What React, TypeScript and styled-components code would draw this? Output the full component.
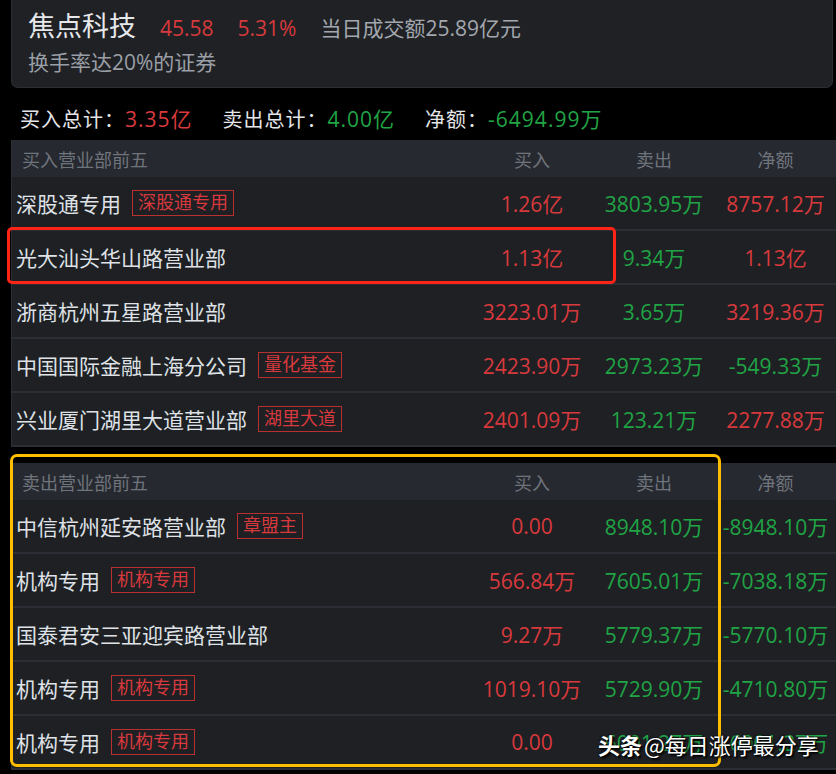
import React from 'react';
import styled, { createGlobalStyle } from 'styled-components';

const GlobalStyle = createGlobalStyle`
  html, body { margin: 0; padding: 0; background: #000; }
  body {
    font-family: "Open Sans", "Noto Sans CJK SC", sans-serif;
    width: 836px;
    height: 774px;
    overflow: hidden;
  }
`;

const RED = '#d8393c';
const GREEN = '#20a445';

const Page = styled.div`
  position: relative;
  width: 836px;
  height: 774px;
  padding-left: 11px;
  box-sizing: border-box;
  display: flex;
  flex-direction: column;
`;

const Card = styled.div`
  width: 822px;
  height: 88px;
  box-sizing: border-box;
  background: #1f2125;
  border: 1px solid #2b2e34;
  border-top: none;
  border-radius: 0 0 7px 7px;
  padding: 6px 16px 0;
  display: flex;
  flex-direction: column;
`;

const TitleRow = styled.div`
  display: flex;
  align-items: baseline;
  gap: 24px;
  height: 40px;
`;

const Title = styled.span`
  font-size: 27px;
  color: #e6e8eb;
  line-height: 40px;
`;

const Colored = styled.span<{ $c: string; $size?: number }>`
  color: ${(p) => p.$c};
  font-size: ${(p) => p.$size ?? 21}px;
`;

const Sub = styled.div`
  font-size: 21px;
  line-height: 30px;
  color: #9a9fa6;
  margin-top: 1px;
`;

const Totals = styled.div`
  height: 52px;
  box-sizing: border-box;
  padding: 8px 0 0 9px;
  display: flex;
  align-items: center;
  gap: 30px;
  font-size: 20px;
`;

const TotalItem = styled.span`
  color: #e4e6e9;
  white-space: nowrap;
  letter-spacing: 1px;
`;

const Table = styled.div<{ $gap?: number }>`
  width: 825px;
  margin-top: ${(p) => p.$gap ?? 0}px;
  background: #1e2024;
  border-left: 1px solid #2c2f35;
  box-sizing: border-box;
`;

const Grid = styled.div`
  display: grid;
  grid-template-columns: 459px 122px 122px 121px;
  align-items: center;
`;

const HeadRow = styled(Grid)`
  height: 37px;
  background: #262930;
  font-size: 18px;
  color: #6f747c;
`;

const HeadName = styled.span`
  padding-left: 10px;
`;

const HeadCell = styled.span`
  text-align: center;
`;

const Row = styled(Grid)`
  height: 54px;
  box-sizing: border-box;
  border-bottom: 2px solid #2b2e34;
`;

const NameCell = styled.div`
  display: flex;
  align-items: center;
  padding-left: 4px;
  font-size: 21px;
  color: #dfe2e6;
  white-space: nowrap;
`;

const Tag = styled.span`
  margin-left: 11px;
  height: 26px;
  box-sizing: border-box;
  border: 1px solid #b8302f;
  padding: 0 5px;
  font-size: 18px;
  line-height: 23px;
  color: #d8393c;
`;

const Num = styled.span<{ $c: string }>`
  text-align: center;
  font-size: 21px;
  color: ${(p) => p.$c};
  white-space: nowrap;
`;

const Mark = styled.div<{ $c: string; $l: number; $t: number; $w: number; $h: number; $r: number }>`
  position: absolute;
  left: ${(p) => p.$l}px;
  top: ${(p) => p.$t}px;
  width: ${(p) => p.$w}px;
  height: ${(p) => p.$h}px;
  box-sizing: border-box;
  border: 3px solid ${(p) => p.$c};
  border-radius: ${(p) => p.$r}px;
  pointer-events: none;
`;

const Watermark = styled.div`
  position: absolute;
  left: 598px;
  top: 728px;
  font-family: "Noto Sans CJK SC", sans-serif;
  font-size: 22px;
  color: #fff;
  white-space: nowrap;
  text-shadow: 1px 1px 1px #000, 2px 2px 2px rgba(0,0,0,0.8), -1px -1px 1px rgba(0,0,0,0.5);
`;

const WmBold = styled.span`
  font-weight: 700;
  margin-right: 2px;
`;

type Rec = { name: string; tag?: string; buy: string; sell: string; net: string };

const buyList: Rec[] = [
  { name: '深股通专用', tag: '深股通专用', buy: '1.26亿', sell: '3803.95万', net: '8757.12万' },
  { name: '光大汕头华山路营业部', buy: '1.13亿', sell: '9.34万', net: '1.13亿' },
  { name: '浙商杭州五星路营业部', buy: '3223.01万', sell: '3.65万', net: '3219.36万' },
  { name: '中国国际金融上海分公司', tag: '量化基金', buy: '2423.90万', sell: '2973.23万', net: '-549.33万' },
  { name: '兴业厦门湖里大道营业部', tag: '湖里大道', buy: '2401.09万', sell: '123.21万', net: '2277.88万' },
];

const sellList: Rec[] = [
  { name: '中信杭州延安路营业部', tag: '章盟主', buy: '0.00', sell: '8948.10万', net: '-8948.10万' },
  { name: '机构专用', tag: '机构专用', buy: '566.84万', sell: '7605.01万', net: '-7038.18万' },
  { name: '国泰君安三亚迎宾路营业部', buy: '9.27万', sell: '5779.37万', net: '-5770.10万' },
  { name: '机构专用', tag: '机构专用', buy: '1019.10万', sell: '5729.90万', net: '-4710.80万' },
  { name: '机构专用', tag: '机构专用', buy: '0.00', sell: '6001.27万', net: '-6001.27万' },
];

const netColor = (v: string) => (v.startsWith('-') ? GREEN : RED);

const Section = ({ title, rows, gap }: { title: string; rows: Rec[]; gap?: number }) => (
  <Table $gap={gap}>
    <HeadRow>
      <HeadName>{title}</HeadName>
      <HeadCell>买入</HeadCell>
      <HeadCell>卖出</HeadCell>
      <HeadCell>净额</HeadCell>
    </HeadRow>
    {rows.map((r, i) => (
      <Row key={i}>
        <NameCell>
          {r.name}
          {r.tag && <Tag>{r.tag}</Tag>}
        </NameCell>
        <Num $c={RED}>{r.buy}</Num>
        <Num $c={GREEN}>{r.sell}</Num>
        <Num $c={netColor(r.net)}>{r.net}</Num>
      </Row>
    ))}
  </Table>
);

export default function App() {
  return (
    <>
      <GlobalStyle />
      <Page>
        <Card>
          <TitleRow>
            <Title>焦点科技</Title>
            <Colored $c={RED}>45.58</Colored>
            <Colored $c={RED}>5.31%</Colored>
            <Colored $c="#a3a7ae">当日成交额25.89亿元</Colored>
          </TitleRow>
          <Sub>换手率达20%的证券</Sub>
        </Card>
        <Totals>
          <TotalItem>
            买入总计：<Colored $c={RED}>3.35亿</Colored>
          </TotalItem>
          <TotalItem>
            卖出总计：<Colored $c={GREEN}>4.00亿</Colored>
          </TotalItem>
          <TotalItem>
            净额：<Colored $c={GREEN}>-6494.99万</Colored>
          </TotalItem>
        </Totals>
        <Section title="买入营业部前五" rows={buyList} />
        <Section title="卖出营业部前五" rows={sellList} gap={16} />
        <Mark $c="#ff2416" $l={7} $t={227} $w={609} $h={57} $r={5} />
        <Mark $c="#ffbf00" $l={10} $t={454} $w={711} $h={313} $r={7} />
        <Watermark>
          <WmBold>头条</WmBold>@每日涨停最分享
        </Watermark>
      </Page>
    </>
  );
}
